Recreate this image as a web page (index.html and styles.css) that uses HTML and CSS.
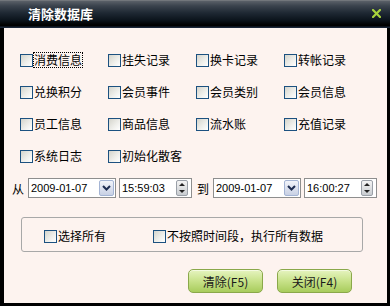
FILE: index.html
```html
<!DOCTYPE html>
<html lang="zh">
<head>
<meta charset="utf-8">
<title>清除数据库</title>
<link rel="stylesheet" href="styles.css">
</head>
<body>
<div class="window">
  <div class="titlebar">
    <span class="title">清除数据库</span>
    <svg class="close" width="9" height="9" viewBox="0 0 9 9"><path d="M1 1 L8 8 M8 1 L1 8" stroke="#a8d43c" stroke-width="2.2" stroke-linecap="square"/></svg>
  </div>
  <div class="content">
    <div class="grid">
      <label class="item"><span class="cb"></span><span class="txt focus">消费信息</span></label>
      <label class="item"><span class="cb"></span><span class="txt">挂失记录</span></label>
      <label class="item"><span class="cb"></span><span class="txt">换卡记录</span></label>
      <label class="item"><span class="cb"></span><span class="txt">转帐记录</span></label>
      <label class="item"><span class="cb"></span><span class="txt">兑换积分</span></label>
      <label class="item"><span class="cb"></span><span class="txt">会员事件</span></label>
      <label class="item"><span class="cb"></span><span class="txt">会员类别</span></label>
      <label class="item"><span class="cb"></span><span class="txt">会员信息</span></label>
      <label class="item"><span class="cb"></span><span class="txt">员工信息</span></label>
      <label class="item"><span class="cb"></span><span class="txt">商品信息</span></label>
      <label class="item"><span class="cb"></span><span class="txt">流水账</span></label>
      <label class="item"><span class="cb"></span><span class="txt">充值记录</span></label>
      <label class="item"><span class="cb"></span><span class="txt">系统日志</span></label>
      <label class="item"><span class="cb"></span><span class="txt">初始化散客</span></label>
    </div>
    <div class="daterow">
      <span class="lbl">从</span>
      <div class="field date"><span class="val">2009-01-07</span><span class="drop"><svg width="9" height="6" viewBox="0 0 9 6"><path d="M1 1 L4.5 4.5 L8 1" stroke="#1e2d52" stroke-width="2" fill="none"/></svg></span></div>
      <div class="field time"><span class="val">15:59:03</span><span class="spin"><span class="up"></span><span class="down"></span></span></div>
      <span class="lbl to">到</span>
      <div class="field date"><span class="val">2009-01-07</span><span class="drop"><svg width="9" height="6" viewBox="0 0 9 6"><path d="M1 1 L4.5 4.5 L8 1" stroke="#1e2d52" stroke-width="2" fill="none"/></svg></span></div>
      <div class="field time"><span class="val">16:00:27</span><span class="spin"><span class="up"></span><span class="down"></span></span></div>
    </div>
    <div class="group">
      <label class="item"><span class="cb"></span><span class="txt">选择所有</span></label>
      <label class="item second"><span class="cb"></span><span class="txt">不按照时间段，执行所有数据</span></label>
    </div>
    <div class="buttons">
      <button class="btn">清除(F5)</button>
      <button class="btn">关闭(F4)</button>
    </div>
  </div>
</div>
</body>
</html>
```

FILE: styles.css
```css
html, body {
  margin: 0;
  padding: 0;
  background: #000;
}
.window {
  width: 390px;
  height: 306px;
  display: flex;
  flex-direction: column;
  font-family: "Noto Sans CJK SC", "Liberation Sans", sans-serif;
  font-size: 12px;
  color: #000;
}
.titlebar {
  height: 28px;
  flex: none;
  display: flex;
  align-items: center;
  justify-content: space-between;
  padding: 0 9px 0 28px;
  box-sizing: border-box;
  background: linear-gradient(#8a8c8e 0, #5a6068 1px, #3a424c 6px, #1e2833 13px, #0c141c 20px, #000 25px, #000 26px, #1a2638 27px, #1a2638 28px);
}
.title {
  color: #fff;
  font-weight: bold;
  font-size: 13px;
  line-height: 13px;
  margin-top: -1px;
}
.close {
  display: block;
  margin-top: -1px;
}
.content {
  flex: 1;
  background: #fdf3ef;
  border-left: 4px solid #000;
  border-right: 3px solid #000;
  border-bottom: 3px solid #000;
  display: flex;
  flex-direction: column;
}
.grid {
  display: grid;
  grid-template-columns: repeat(4, 88px);
  grid-auto-rows: 32px;
  padding: 16px 0 0 16px;
}
.item {
  display: flex;
  align-items: center;
  gap: 1px;
  white-space: nowrap;
}
.cb {
  width: 11px;
  height: 11px;
  flex: none;
  border: 1px solid #1c5180;
  background: linear-gradient(135deg, #d4d4cc 0%, #eeeeea 55%, #ffffff 100%);
}
.txt {
  line-height: 14px;
}
.txt.focus {
  outline: 1px dotted #000;
  outline-offset: 0;
}
.daterow {
  display: flex;
  align-items: center;
  margin-top: 6px;
  padding-left: 8px;
  height: 20px;
}
.lbl {
  width: 12px;
  margin-right: 4px;
}
.lbl.to {
  margin-left: 5px;
}
.field {
  height: 20px;
  box-sizing: border-box;
  border: 1px solid #8e8e8e;
  background: #fff;
  display: flex;
  align-items: center;
  justify-content: space-between;
  padding: 0 1px 0 2px;
  font-family: "Liberation Sans", sans-serif;
  font-size: 11px;
}
.field.date {
  width: 88px;
  margin-right: 3px;
}
.field.time {
  width: 73px;
  padding-right: 3px;
}
.val {
  line-height: 12px;
}
.drop {
  width: 13px;
  height: 14px;
  border: 1px solid #a4b4d4;
  border-radius: 2px;
  background: linear-gradient(#f2f4fa, #c8d0e4);
  display: flex;
  align-items: center;
  justify-content: center;
}
.spin {
  width: 10px;
  height: 14px;
  display: flex;
  flex-direction: column;
  border: 1px solid #9aa0a8;
  border-radius: 2px;
  background: linear-gradient(#f4f4f4, #c8ccd0);
}
.spin .up, .spin .down {
  flex: 1;
  display: flex;
  align-items: center;
  justify-content: center;
}
.spin .up::before {
  content: "";
  border-left: 3px solid transparent;
  border-right: 3px solid transparent;
  border-bottom: 3px solid #222;
}
.spin .down::before {
  content: "";
  border-left: 3px solid transparent;
  border-right: 3px solid transparent;
  border-top: 3px solid #222;
}
.group {
  margin: 19px 0 0 17px;
  width: 342px;
  height: 35px;
  box-sizing: border-box;
  border: 1px solid #a8a8a8;
  border-radius: 3px;
  display: flex;
  align-items: center;
  padding: 3px 0 0 22px;
}
.group .second {
  margin-left: 47px;
}
.buttons {
  display: flex;
  justify-content: flex-end;
  gap: 14px;
  margin-top: 17px;
  padding-right: 35px;
}
.btn {
  width: 75px;
  height: 24px;
  border: 1px solid #8aa84a;
  border-radius: 5px;
  background: linear-gradient(#e6f4c0 0%, #c8e28a 50%, #a8cc5c 100%);
  font-family: "Noto Sans CJK SC", sans-serif;
  font-size: 12px;
  color: #1a1a1a;
  padding: 0;
  box-shadow: inset 0 1px 0 #f4fae0;
}
```
